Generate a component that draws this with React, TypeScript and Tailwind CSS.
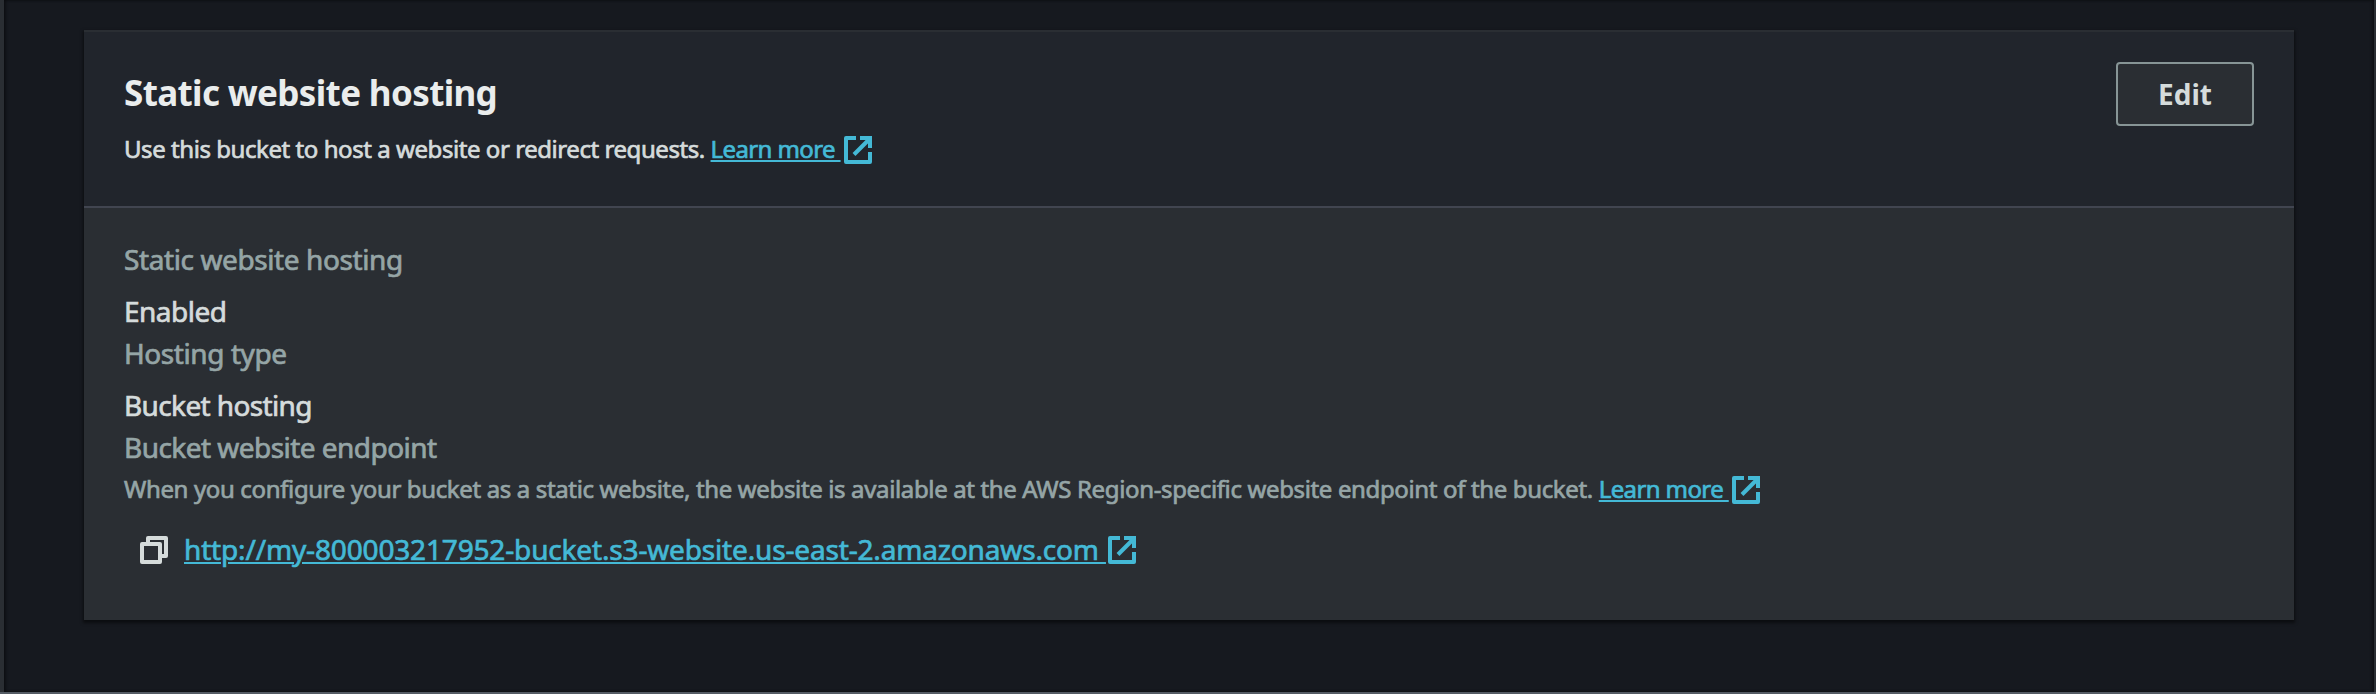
function ExternalIcon({ className = "" }: { className?: string }) {
  return (
    <svg
      viewBox="0 0 28 28"
      fill="none"
      stroke="currentColor"
      strokeWidth="4"
      strokeLinejoin="round"
      className={`h-7 w-7 shrink-0 text-[#44b9d6] ${className}`}
    >
      <path d="M12 2H2V26H26V16" />
      <path d="M16 2H26V12" strokeLinejoin="miter" />
      <path d="M10 18.5L26 2.5" />
    </svg>
  );
}

function CopyIcon() {
  return (
    <svg
      viewBox="0 0 28 28"
      fill="none"
      stroke="currentColor"
      strokeWidth="4"
      strokeLinejoin="round"
      className="mt-2 h-7 w-7 shrink-0 text-[#d5dbdb]"
    >
      <path d="M2 8H20V26H2Z" />
      <path d="M8 6V2H26V20H22" />
    </svg>
  );
}

const linkStyle =
  "whitespace-pre text-[#44b9d6] underline decoration-2 underline-offset-[2px]";

function LearnMore() {
  return (
    <>
      <a className={`${linkStyle} tracking-[-0.61px]`}>{"Learn more\u00a0"}</a>
      <ExternalIcon className="mt-[3px] ml-[3px]" />
    </>
  );
}

export default function App() {
  return (
    <div
      className="flex h-[694px] w-[2376px] flex-col border-b-2 border-[#545b64] bg-[#16191f] [-webkit-text-stroke:0.7px_currentColor]"
      style={{ fontFamily: '"Noto Sans", sans-serif' }}
    >
      <div className="flex flex-1">
        <div className="w-1 bg-[#2a2e33]" />
        <main className="flex-1 px-20 pt-[30px] shadow-[inset_2px_0_3px_rgba(0,0,0,0.4),inset_-2px_0_3px_rgba(0,0,0,0.4)]">
          <section className="h-[590px] w-[2210px] bg-[#2a2e33] shadow-[0_2px_3px_1px_rgba(0,0,0,0.5)]">
            <header className="flex h-[178px] items-start justify-between border-t-2 border-b-2 border-t-[#2a2e33] border-b-[#414550] bg-[#21252c] pr-10 pl-10">
              <div className="pt-[39px]">
                <h2 className="h-[62px] text-[35px] leading-[44px] font-bold tracking-[-0.64px] text-[#eaeded] [-webkit-text-stroke:0px]">
                  Static website hosting
                </h2>
                <div className="flex items-start text-2xl leading-8 text-[#d5dbdb]">
                  <span className="whitespace-pre tracking-[-0.44px]">
                    {"Use this bucket to host a website or redirect requests. "}
                  </span>
                  <LearnMore />
                </div>
              </div>
              <button className="mt-[30px] h-16 w-[138px] rounded-[4px] border-2 border-[#879596] bg-[#2a2e33] text-[28px] leading-[58px] font-bold text-[#d5dbdb] [-webkit-text-stroke:0px]">
                Edit
              </button>
            </header>
            <div className="pt-[30px] pl-10 text-[28px] leading-[42px]">
              <dl className="text-[#95a5a6]">
                <dt className="tracking-[-0.4px]">Static website hosting</dt>
                <dd className="pt-[10px] tracking-[-0.5px] text-[#d5dbdb]">Enabled</dd>
                <dt className="tracking-[-0.42px]">Hosting type</dt>
                <dd className="pt-[10px] tracking-[-0.62px] text-[#d5dbdb]">
                  Bucket hosting
                </dd>
                <dt className="tracking-[-0.54px]">Bucket website endpoint</dt>
              </dl>
              <div className="mt-[5px] flex items-start text-2xl leading-8 text-[#95a5a6]">
                <span className="whitespace-pre tracking-[-0.359px]">
                  {
                    "When you configure your bucket as a static website, the website is available at the AWS Region-specific website endpoint of the bucket. "
                  }
                </span>
                <LearnMore />
              </div>
              <div className="mt-[23px] flex items-start pl-4">
                <CopyIcon />
                <a className={`${linkStyle} ml-4 tracking-[-0.16px]`}>
                  {"http://my-800003217952-bucket.s3-website.us-east-2.amazonaws.com\u00a0"}
                </a>
                <ExternalIcon className="mt-2 ml-0.5" />
              </div>
            </div>
          </section>
        </main>
        <div className="w-0.5 bg-[#2a2e33]" />
      </div>
    </div>
  );
}
